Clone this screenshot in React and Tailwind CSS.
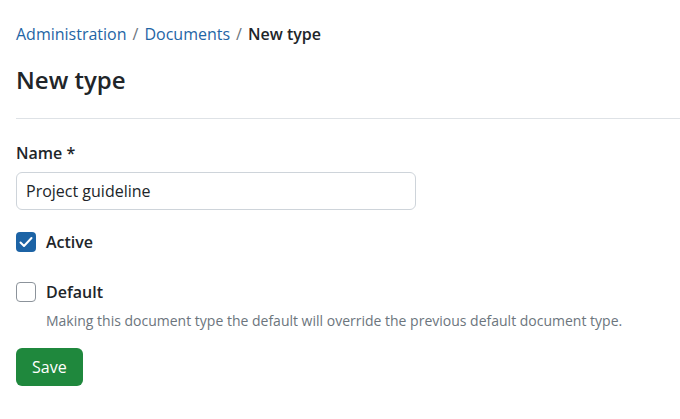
import React from 'react';

const font = { fontFamily: '"Open Sans", "Noto Sans", sans-serif' };

const App = () => {
    return (
        <div className="bg-white min-h-screen text-[#212529]" style={font}>
            <div className="pl-4">
                {/* Breadcrumb */}
                <nav className="pt-[22px] text-[16px] leading-6 flex items-center gap-[6px]">
                    <a href="#" className="text-[#1f65a5]">Administration</a>
                    <span className="text-[#6c757d]">/</span>
                    <a href="#" className="text-[#1f65a5]">Documents</a>
                    <span className="text-[#6c757d]">/</span>
                    <span className="font-semibold">New type</span>
                </nav>

                <h1 className="mt-[18px] text-[24px] leading-8 font-semibold">New type</h1>

                {/* Divider */}
                <div className="mt-[22px] border-t border-[#dee2e6]" />

                {/* Form */}
                <form className="pt-[22px]">
                    <label className="block text-[16px] leading-6 font-semibold">Name *</label>
                    <input
                        type="text"
                        defaultValue="Project guideline"
                        className="mt-[7px] block w-[400px] h-[38px] px-[9px] text-[16px] border border-[#ced4da] rounded-md outline-none text-[#212529]"
                        style={font}
                    />

                    <label className="mt-[20px] flex items-center gap-[10px]">
                        <span className="w-5 h-5 rounded-[4px] bg-[#1c63a5] flex items-center justify-center">
                            <svg className="w-4 h-4" viewBox="0 0 16 16" fill="none" stroke="white" strokeWidth="2" strokeLinecap="round" strokeLinejoin="round">
                                <path d="M2.5 8.5l3.5 3.5L13.5 4" />
                            </svg>
                        </span>
                        <span className="text-[16px] leading-6 font-semibold">Active</span>
                    </label>

                    <label className="mt-[26px] flex items-center gap-[10px]">
                        <span className="w-5 h-5 rounded-[4px] border border-[#8c939b] bg-white" />
                        <span className="text-[16px] leading-6 font-semibold">Default</span>
                    </label>
                    <p className="ml-[30px] mt-[7px] text-[14px] leading-5 text-[#6c757d]">
                        Making this document type the default will override the previous default document type.
                    </p>

                    <button
                        type="button"
                        className="mt-[17px] h-[38px] px-4 rounded-md bg-[#1f883d] text-white text-[16px]"
                        style={font}
                    >
                        Save
                    </button>
                </form>
            </div>
        </div>
    );
};

export default App;
